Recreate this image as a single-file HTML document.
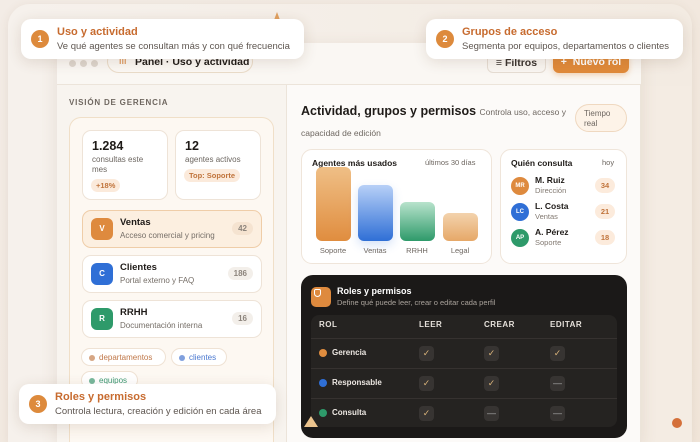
<!DOCTYPE html>
<html><head><meta charset="utf-8"><style>
*{box-sizing:border-box;margin:0;padding:0}
html,body{width:700px;height:442px;overflow:hidden}
body{font-family:"Liberation Sans",sans-serif;background:linear-gradient(135deg,#f3ece6,#f1e6da);color:#1f1b18}
#wrap{position:relative;width:700px;height:442px;overflow:hidden}
.abs{position:absolute}
.outer{left:8px;top:4px;width:684px;height:438px;border-radius:22px 22px 0 0;background:linear-gradient(90deg,#f6f1ec,#f3ebe2);box-shadow:0 2px 10px rgba(120,90,60,.1)}
.win{left:57px;top:43px;width:584px;height:399px;background:#fcfaf8;border:1px solid #ece4da;border-bottom:none;box-shadow:0 4px 16px rgba(120,90,60,.12)}
.hdr{left:57px;top:43px;width:584px;height:42px;border-bottom:1px solid #ece4da;background:#faf7f3}
.dot{width:7px;height:7px;border-radius:50%;background:#ddd6ce;top:60px}
.pill{left:107px;top:50px;width:146px;height:23px;border:1px solid #eadcc9;border-radius:12px;background:#fbf8f4;font-size:10.5px;font-weight:bold;padding:5px 0 0 27px;white-space:nowrap}
.btn{top:52px;height:21px;border-radius:6px;font-size:10.5px;font-weight:bold;padding:4px 0 0 0;text-align:center;white-space:nowrap}
.tip{background:#fff;border-radius:10px;box-shadow:0 3px 14px rgba(90,60,30,.14);height:40px}
.tip .n{position:absolute;left:10px;top:11px;width:18px;height:18px;border-radius:50%;background:#dd8a3c;color:#fff;font-size:9px;font-weight:bold;text-align:center;line-height:18px}
.tip b{position:absolute;left:36px;top:7px;font-size:11px;color:#c76b2f}
.tip span{position:absolute;left:36px;top:22px;font-size:9.5px;color:#5e5650;white-space:nowrap}
.left{left:57px;top:85px;width:230px;height:357px;background:#f8f4ef;border-right:1px solid #ece4da}
.cont{left:69px;top:117px;width:205px;height:325px;border:1px solid #f0dfc8;border-bottom:none;border-radius:12px 12px 0 0;background:#fdf8f2}
.stat{top:130px;width:86px;height:70px;background:#fff;border:1px solid #eee3d7;border-radius:9px}
.stat .v{position:absolute;left:9px;top:8px;font-size:12.5px;font-weight:bold}
.stat .l{position:absolute;left:9px;top:24px;font-size:8px;color:#6c6660;line-height:10px}
.badge{position:absolute;background:#fbeadb;color:#c0743c;font-size:7.5px;font-weight:bold;border-radius:8px;padding:2px 5px;white-space:nowrap}
.row{left:82px;width:180px;height:38px;background:#fff;border:1px solid #eee3d7;border-radius:9px}
.row .ic{position:absolute;left:8px;top:7px;width:22px;height:22px;border-radius:6px;color:#fff;font-size:8px;font-weight:bold;text-align:center;line-height:22px}
.row b{position:absolute;left:37px;top:6px;font-size:9.5px}
.row span{position:absolute;left:37px;top:20px;font-size:8px;color:#756e67;white-space:nowrap}
.row i{position:absolute;right:8px;top:11px;font-style:normal;font-size:8px;font-weight:bold;color:#8c847c;background:#f3efea;border-radius:8px;padding:2px 6px}
.tag{height:18px;border:1px solid #efe2d4;border-radius:9px;background:#fff;font-size:8px;padding:4px 0 0 17px}
.tag:before{content:"";position:absolute;left:7px;top:6px;width:6px;height:6px;border-radius:50%;background:currentColor;opacity:.7}
.card{background:#fff;border:1px solid #efe5da;border-radius:11px}
.bar{width:35px;border-radius:6px}
.bl{top:246px;font-size:7.5px;color:#6e6761;width:40px;text-align:center}
.av{left:511px;width:18px;height:18px;border-radius:50%;color:#fff;font-size:6px;font-weight:bold;text-align:center;line-height:18px}
.nm{left:535px;font-size:8.5px;font-weight:bold}
.sb{left:535px;font-size:7.5px;color:#837a72}
.cnt{left:595px;width:20px;height:15px;border-radius:8px;background:#fcebdc;color:#c0743c;font-size:7.5px;font-weight:bold;text-align:center;line-height:15px}
.dark{left:301px;top:275px;width:326px;height:163px;background:#1b1918;border-radius:12px}
.tbl{left:311px;top:315px;width:306px;height:112px;background:#252321;border-radius:8px}
.th{top:320px;font-size:8px;font-weight:bold;color:#e5e0da;letter-spacing:.5px}
.hl{left:311px;width:306px;height:1px;background:#363230}
.rn{left:332px;font-size:8px;font-weight:bold;color:#ece7e2}
.rd{left:319px;width:8px;height:8px;border-radius:50%}
.cb{width:15px;height:15px;border-radius:4px;background:#373432;color:#d9b37a;font-size:9px;text-align:center;line-height:15px}
.cb.m{color:#aaa}
</style></head><body><div id="wrap">
<div class="abs outer"></div>
<div class="abs" style="left:641px;top:86px;width:50px;height:356px;background:#f4ece3"></div>
<div class="abs win"></div>
<div class="abs hdr"></div>
<div class="abs dot" style="left:69px"></div><div class="abs dot" style="left:80px"></div><div class="abs dot" style="left:91px"></div>
<div class="abs pill"><span style="position:absolute;left:11px;top:5px;color:#e0a06a;font-size:9px">ılı</span>Panel · Uso y actividad</div>
<div class="abs btn" style="left:487px;width:59px;border:1px solid #e6ddd3;background:#f9f6f2;color:#3a3430">≡ Filtros</div>
<div class="abs btn" style="left:553px;width:76px;background:#e08a3a;color:#fff;box-shadow:0 2px 6px rgba(224,138,58,.35)">+&nbsp; Nuevo rol</div>

<div class="abs left"></div>
<div class="abs" style="left:69px;top:98px;font-size:8px;font-weight:bold;color:#6f6760;letter-spacing:.8px">VISIÓN DE GERENCIA</div>
<div class="abs cont"></div>
<div class="abs stat" style="left:82px"><div class="v">1.284</div><div class="l">consultas este<br>mes</div><div class="badge" style="left:8px;top:48px">+18%</div></div>
<div class="abs stat" style="left:175px"><div class="v">12</div><div class="l">agentes activos</div><div class="badge" style="left:8px;top:38px">Top: Soporte</div></div>
<div class="abs row" style="top:210px;background:#fcefe0;border-color:#efcda8"><div class="ic" style="background:#de8a3e">V</div><b>Ventas</b><span>Acceso comercial y pricing</span><i style="background:#f5e3d0">42</i></div>
<div class="abs row" style="top:255px"><div class="ic" style="background:#2f6fd6">C</div><b>Clientes</b><span>Portal externo y FAQ</span><i>186</i></div>
<div class="abs row" style="top:300px"><div class="ic" style="background:#2e9a6a">R</div><b>RRHH</b><span>Documentación interna</span><i>16</i></div>
<div class="abs tag" style="left:81px;top:348px;width:85px;color:#c48050"><span style="color:#c0784a">departamentos</span></div>
<div class="abs tag" style="left:171px;top:348px;width:56px;color:#4a78d0"><span>clientes</span></div>
<div class="abs tag" style="left:81px;top:371px;width:57px;color:#3f9a74"><span>equipos</span></div>

<div class="abs" style="left:301px;top:101px;font-size:12.5px;font-weight:bold;width:270px;line-height:20px">Actividad, grupos y permisos <span style="font-size:8.5px;font-weight:normal;color:#6e6761">Controla uso, acceso y capacidad de edición</span></div>
<div class="abs" style="left:575px;top:104px;width:52px;height:28px;border:1px solid #efd8c0;border-radius:14px;background:#fdf3e8;font-size:8px;color:#6e6761;padding:4px 0 0 8px;line-height:10px">Tiempo<br>real</div>

<div class="abs card" style="left:301px;top:149px;width:191px;height:115px"></div>
<div class="abs" style="left:312px;top:158px;font-size:8.5px;font-weight:bold">Agentes más usados</div>
<div class="abs" style="left:425px;top:158px;font-size:7.5px;color:#6e6761">últimos 30 días</div>
<div class="abs bar" style="left:316px;top:167px;height:74px;background:linear-gradient(#efbf86,#e08d3f)"></div>
<div class="abs bar" style="left:358px;top:185px;height:56px;background:linear-gradient(#b7d0f7,#2f6fd6);box-shadow:0 4px 10px rgba(47,111,214,.2)"></div>
<div class="abs bar" style="left:400px;top:202px;height:39px;background:linear-gradient(#b8e3cc,#2e9a6a)"></div>
<div class="abs bar" style="left:443px;top:213px;height:28px;background:linear-gradient(#f3d3ad,#e6a868)"></div>
<div class="abs bl" style="left:313px">Soporte</div><div class="abs bl" style="left:355px">Ventas</div><div class="abs bl" style="left:397px">RRHH</div><div class="abs bl" style="left:440px">Legal</div>

<div class="abs card" style="left:500px;top:149px;width:127px;height:115px"></div>
<div class="abs" style="left:511px;top:158px;font-size:8.5px;font-weight:bold">Quién consulta</div>
<div class="abs" style="left:602px;top:158px;font-size:7.5px;color:#6e6761">hoy</div>
<div class="abs av" style="top:177px;background:#de8a3e">MR</div><div class="abs nm" style="top:175px">M. Ruiz</div><div class="abs sb" style="top:186px">Dirección</div><div class="abs cnt" style="top:178px">34</div>
<div class="abs av" style="top:203px;background:#2f6fd6">LC</div><div class="abs nm" style="top:201px">L. Costa</div><div class="abs sb" style="top:212px">Ventas</div><div class="abs cnt" style="top:204px">21</div>
<div class="abs av" style="top:229px;background:#2e9a6a">AP</div><div class="abs nm" style="top:227px">A. Pérez</div><div class="abs sb" style="top:238px">Soporte</div><div class="abs cnt" style="top:230px">18</div>

<div class="abs dark"></div>
<div class="abs" style="left:311px;top:287px;width:20px;height:20px;border-radius:5px;background:#de8a3e"><div style="position:absolute;left:3px;top:2px;width:7px;height:8px;border:1.3px solid #fff;border-radius:2px 2px 4px 4px"></div></div>
<div class="abs" style="left:337px;top:286px;font-size:9px;font-weight:bold;color:#fff">Roles y permisos</div>
<div class="abs" style="left:337px;top:298px;font-size:7.5px;color:#a9a29b">Define qué puede leer, crear o editar cada perfil</div>
<div class="abs tbl"></div>
<div class="abs th" style="left:319px">ROL</div><div class="abs th" style="left:419px">LEER</div><div class="abs th" style="left:484px">CREAR</div><div class="abs th" style="left:550px">EDITAR</div>
<div class="abs hl" style="top:338px"></div><div class="abs hl" style="top:368px"></div><div class="abs hl" style="top:398px"></div>
<div class="abs rd" style="top:349px;background:#e08d3f"></div><div class="abs rn" style="top:348px">Gerencia</div>
<div class="abs rd" style="top:379px;background:#2f6fd6"></div><div class="abs rn" style="top:378px">Responsable</div>
<div class="abs rd" style="top:409px;background:#2e9a6a"></div><div class="abs rn" style="top:408px">Consulta</div>
<div class="abs cb" style="left:419px;top:346px">✓</div><div class="abs cb" style="left:484px;top:346px">✓</div><div class="abs cb" style="left:550px;top:346px">✓</div>
<div class="abs cb" style="left:419px;top:376px">✓</div><div class="abs cb" style="left:484px;top:376px">✓</div><div class="abs cb m" style="left:550px;top:376px">—</div>
<div class="abs cb" style="left:419px;top:406px">✓</div><div class="abs cb m" style="left:484px;top:406px">—</div><div class="abs cb m" style="left:550px;top:406px">—</div>
<div class="abs" style="left:304px;top:416px;width:0;height:0;border-left:7px solid transparent;border-right:7px solid transparent;border-bottom:11px solid #ecc48e"></div>
<div class="abs" style="left:274px;top:12px;width:0;height:0;border-left:3px solid transparent;border-right:3px solid transparent;border-bottom:8px solid #e0a060"></div>
<div class="abs" style="left:672px;top:418px;width:10px;height:10px;border-radius:50%;background:#d4703a"></div>

<div class="abs tip" style="left:21px;top:19px;width:283px"><div class="n">1</div><b>Uso y actividad</b><span>Ve qué agentes se consultan más y con qué frecuencia</span></div>
<div class="abs tip" style="left:426px;top:19px;width:257px"><div class="n">2</div><b>Grupos de acceso</b><span>Segmenta por equipos, departamentos o clientes</span></div>
<div class="abs tip" style="left:19px;top:384px;width:257px"><div class="n">3</div><b>Roles y permisos</b><span>Controla lectura, creación y edición en cada área</span></div>
</div></body></html>
